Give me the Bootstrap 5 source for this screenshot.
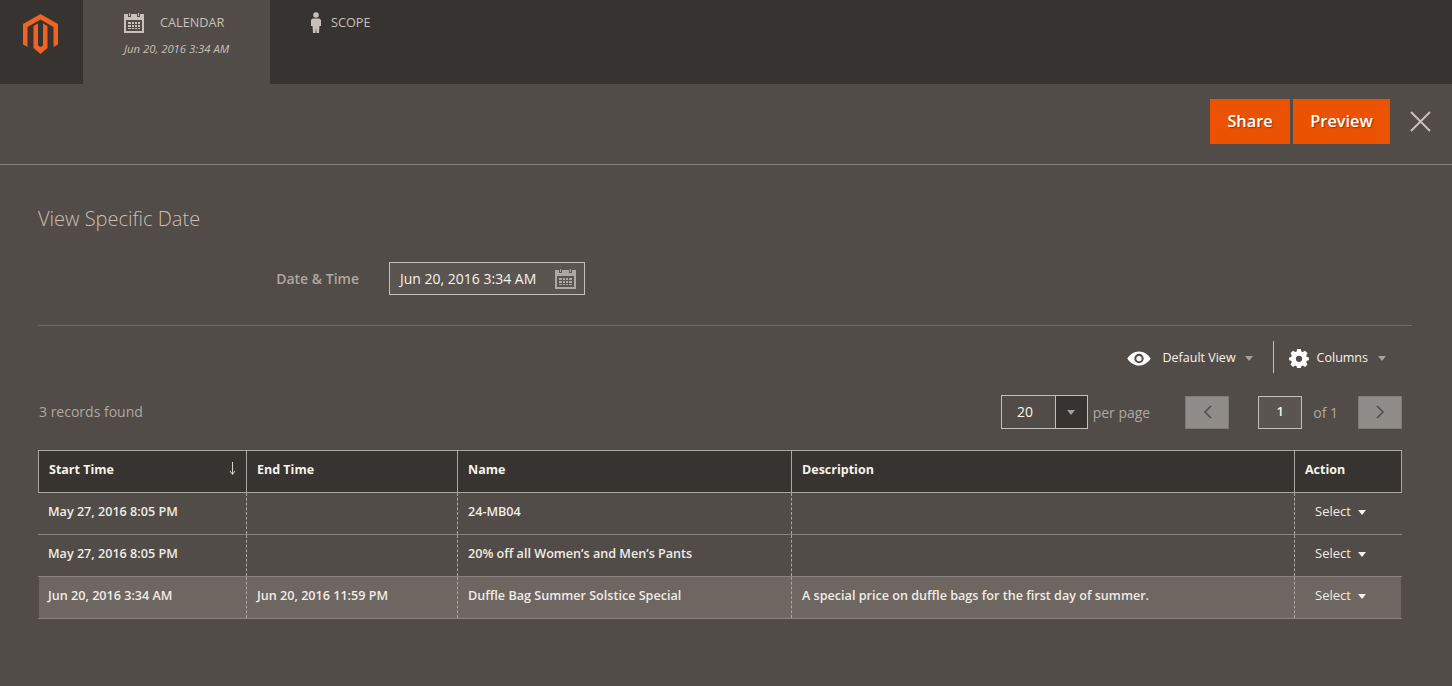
<!DOCTYPE html>
<html lang="en">
<head>
  <meta charset="UTF-8">
  <title>Staging – View Specific Date</title>
  <link href="https://cdn.jsdelivr.net/npm/bootstrap@5.3.0/dist/css/bootstrap.min.css" rel="stylesheet" />
  <style>
    html, body { height: 100%; }
    body {
      font-family: "Open Sans", "Liberation Sans", sans-serif;
      background-color: #514c48;
      color: #f7f3eb;
      font-size: 13px;
      overflow: hidden;
    }
    .top-strip { height: 84px; background: #373330; }
    .logo-cell { width: 83px; padding: 14px 0 0 23px; }
    .tab-calendar { width: 187px; background: #514c48; padding: 12px 0 0 41px; }
    .tab-scope { padding: 12px 0 0 40px; }
    .tab-label { font-size: 12.7px; color: #c7c1b9; line-height: 20px; }
    .tab-date { font-size: 11.3px; font-style: italic; color: #c7c1b9; margin-top: 8px; line-height: 16px; }
    .action-strip { height: 81px; border-bottom: 1px solid #89847f; padding: 15px 21px 0 0; }
    .btn-orange {
      background: #eb5202; color: #fff; border: 0; border-radius: 0;
      height: 45px; font-size: 16.3px; font-weight: 600; line-height: 45px; padding: 0;
      text-shadow: 1px 1px 1px rgba(0,0,0,.35);
    }
    .btn-orange:hover { background: #eb5202; color: #fff; }
    .btn-share { width: 80px; margin-right: 3px; }
    .btn-preview { width: 97px; margin-right: 20px; }
    .close-x { margin-top: 12px; }
    .page-body { padding: 40px 40px 0 38px; }
    .page-title { font-size: 20px; font-weight: 300; color: #d0bcae; line-height: 28px; margin: 0; }
    .field-row { margin-top: 29px; padding-bottom: 30px; border-bottom: 1px solid #6f6a66; }
    .field-label { width: 321px; text-align: right; font-weight: 600; font-size: 14px; color: #aea8a2; margin-right: 30px; }
    .date-box {
      width: 196px; height: 33px; border: 1px solid #c4bfb8; background: #5a5551;
      padding: 0 8px 0 10px; font-size: 14px; color: #f7f3eb;
    }
    .view-row { height: 32px; margin-top: 16px; padding-right: 26px; font-size: 12.5px; }
    .caret-sm { width: 0; height: 0; border-left: 4px solid transparent; border-right: 4px solid transparent; border-top: 5px solid #a5a09a; display: inline-block; }
    .caret-white { border-top-color: #f7f3eb; }
    .view-split { width: 1px; height: 32px; background: #c4bfb8; margin: -2px 15px 0 20px; }
    .caret-gap { margin-left: 9px; }
    .caret-gap-end { margin-left: 10px; }
    .pager-row { height: 34px; margin-top: 21px; padding-right: 10px; }
    .found-text { font-size: 14px; color: #aea8a2; padding: 0 0 2px 1px; }
    .pager-text { font-size: 14px; color: #aea8a2; }
    .size-box { width: 87px; height: 34px; border: 1px solid #c4bfb8; }
    .size-num { width: 53px; padding-right: 6px; text-align: center; font-size: 14px; line-height: 32px; background: #514c48; }
    .size-drop { flex: 1; background: #373330; border-left: 1px solid #c4bfb8; }
    .per-page { margin-left: 5px; margin-right: 35px; }
    .page-arrow { width: 44px; height: 33px; background: #8f8c89; border: 1px solid #7d7a76; }
    .page-num { width: 44px; height: 33px; margin-left: 29px; border: 1px solid #c4bfb8; background: #5a5551; font-size: 13px; font-weight: 600; }
    .page-of { margin-left: 11px; margin-right: 20px; }
    .grid-table { width: 1363px; margin-top: 21px; border-collapse: collapse; table-layout: fixed; }
    .grid-table th {
      background: #373330; height: 42px; padding: 0 10px 2px; font-size: 12.5px; font-weight: 700;
      border: 1px solid #aaa6a1; color: #f7f3eb;
    }
    .grid-table td {
      height: 42px; padding: 0 10px 3px; font-size: 12.6px; font-weight: 600; color: #f0ece5;
      border-bottom: 1px solid #89847f; border-left: 1px dashed #aaa6a1;
    }
    .grid-table td:first-child { border-left: 1px solid #514c48; padding-left: 9px; }
    .grid-table td:last-child { border-right: 1px solid #514c48; }
    .grid-table tr.row-on td { background: #6d6661; }
    .sort-arrow { float: right; margin: 1px 0 0 0; }
    .grid-table td.select-cell { padding: 0 10px 4px 20px; font-size: 13px; font-weight: 400; }
    .select-cell .caret-sm { margin-left: 7px; }
  </style>
</head>
<body>

  <div class="top-strip d-flex">
    <div class="logo-cell">
      <svg width="35" height="40" viewBox="0 0 35 40"><path fill="#f26322" d="M17.500 0 35 10v20.500L30.500 33V13L17.500 5.500 4.500 13v20L0 30.500V10z"/><path fill="#f26322" d="M10.500 12 15 9.500v22l2.500 1.500 2.500-1.500v-22l4.500 2.500v22L17.500 40l-7-6z"/></svg>
    </div>
    <div class="tab-calendar">
      <div class="d-flex align-items-start">
        <svg width="20" height="21" viewBox="0 0 20 21"><path fill="#c7c1b9" d="M0 2h20v19H0z"/><path fill="#514c48" d="M2 8h16v11H2z"/><path fill="#c7c1b9" d="M4 10h12v7H4z"/><path fill="#514c48" d="M7 10h1v7H7zM10 10h1v7h-1zM13 10h1v7h-1zM4 12h12v1H4zM4 15h12v1H4z"/><path fill="#514c48" d="M4 0h3v5H4zM13 0h3v5h-3z"/><path fill="#c7c1b9" d="M5 1h1v3H5zM14 1h1v3h-1z"/></svg>
        <span class="tab-label ms-3">CALENDAR</span>
      </div>
      <div class="tab-date">Jun 20, 2016 3:34 AM</div>
    </div>
    <div class="tab-scope d-flex align-items-start">
      <svg width="12" height="21" viewBox="0 0 12 21"><circle cx="6" cy="3" r="2.800" fill="#c7c1b9"/><path fill="#c7c1b9" d="M2.500 6.500h7L11 8v6H9.500l-.5 7H6.500L6 16l-.5 5H3l-.5-7H1V8z"/></svg>
      <span class="tab-label" style="margin-left:9px">SCOPE</span>
    </div>
  </div>

  <div class="action-strip d-flex justify-content-end">
    <button type="button" class="btn btn-orange btn-share">Share</button>
    <button type="button" class="btn btn-orange btn-preview">Preview</button>
    <svg class="close-x" width="21" height="21" viewBox="0 0 21 21"><path d="M1 1l19 19M20 1 1 20" stroke="#c7c1b9" stroke-width="2" fill="none"/></svg>
  </div>

  <div class="page-body">
    <h2 class="page-title">View Specific Date</h2>

    <div class="field-row d-flex align-items-center">
      <div class="field-label">Date &amp; Time</div>
      <div class="date-box d-flex align-items-center justify-content-between">
        <span>Jun 20, 2016 3:34 AM</span>
        <svg width="21" height="21" viewBox="0 0 21 21"><path fill="#aea8a2" d="M0 2h21v19H0z"/><path fill="#5a5551" d="M2 8h17v11H2z"/><path fill="#aea8a2" d="M4 10h13v7H4z"/><path fill="#5a5551" d="M7 10h1v7H7zM10 10h1v7h-1zM13 10h1v7h-1zM4 12h13v1H4zM4 15h13v1H4z"/><path fill="#5a5551" d="M4 0h3v5H4zM14 0h3v5h-3z"/><path fill="#aea8a2" d="M5 1h1v3H5zM15 1h1v3h-1z"/></svg>
      </div>
    </div>

    <div class="view-row d-flex align-items-center justify-content-end">
      <svg class="me-2" width="24" height="15" viewBox="0 0 25 16"><path fill="#fff" fill-rule="evenodd" d="M12.500 0.500C18 .5 22.500 4 25 8c-2.500 4-7 7.500-12.500 7.500S2.500 12 0 8C2.500 4 7 .5 12.500.5zM12.500 3a5 5 0 1 0 0 10 5 5 0 0 0 0-10z"/><circle cx="12.500" cy="8" r="2.800" fill="#fff"/></svg>
      <span class="ms-1">Default View</span>
      <span class="caret-sm caret-gap"></span>
      <div class="view-split"></div>
      <svg width="20" height="20" viewBox="0 0 20 20"><path fill="#fff" fill-rule="evenodd" d="M8 0h4l.6 2.800 1.700.7L16.700 2l2.800 2.800-1.500 2.400.7 1.700L21 9.500v3l-2.300.6-.7 1.700 1.500 2.400-2.800 2.800-2.400-1.500-1.700.7L12 22H8l-.6-2.800-1.700-.7L3.300 20 .5 17.200 2 14.800l-.7-1.700L-1 12.500v-3l2.300-.6.7-1.700L.5 4.800 3.300 2l2.400 1.500 1.700-.7zM10 7.500a3.500 3.500 0 1 0 0 7 3.500 3.500 0 0 0 0-7z" transform="translate(1 .9) scale(.9)"/></svg>
      <span class="ms-2">Columns</span>
      <span class="caret-sm caret-gap-end"></span>
    </div>

    <div class="pager-row d-flex align-items-center">
      <div class="found-text flex-grow-1">3 records found</div>
      <div class="size-box d-flex">
        <div class="size-num">20</div>
        <div class="size-drop d-flex align-items-center justify-content-center"><span class="caret-sm"></span></div>
      </div>
      <span class="pager-text per-page">per page</span>
      <div class="page-arrow d-flex align-items-center justify-content-center">
        <svg width="9" height="14" viewBox="0 0 9 14"><path d="M8 1 2 7l6 6" stroke="#514c48" stroke-width="1.500" fill="none"/></svg>
      </div>
      <div class="page-num d-flex align-items-center justify-content-center">1</div>
      <span class="pager-text page-of">of 1</span>
      <div class="page-arrow d-flex align-items-center justify-content-center">
        <svg width="9" height="14" viewBox="0 0 9 14"><path d="M1 1l6 6-6 6" stroke="#514c48" stroke-width="1.500" fill="none"/></svg>
      </div>
    </div>

    <table class="grid-table">
      <colgroup>
        <col style="width:208px"><col style="width:211px"><col style="width:334px"><col style="width:503px"><col style="width:107px">
      </colgroup>
      <thead>
        <tr>
          <th>Start Time<svg class="sort-arrow" width="7" height="13" viewBox="0 0 7 13"><path d="M3.500 0v12M1 9l2.500 3.500L6 9" stroke="#d8d4ce" fill="none"/></svg></th>
          <th>End Time</th>
          <th>Name</th>
          <th>Description</th>
          <th>Action</th>
        </tr>
      </thead>
      <tbody>
        <tr>
          <td>May 27, 2016 8:05 PM</td><td></td><td>24-MB04</td><td></td>
          <td class="select-cell">Select<span class="caret-sm caret-white align-middle"></span></td>
        </tr>
        <tr>
          <td>May 27, 2016 8:05 PM</td><td></td><td>20% off all Women’s and Men’s Pants</td><td></td>
          <td class="select-cell">Select<span class="caret-sm caret-white align-middle"></span></td>
        </tr>
        <tr class="row-on">
          <td>Jun 20, 2016 3:34 AM</td><td>Jun 20, 2016 11:59 PM</td><td>Duffle Bag Summer Solstice Special</td><td>A special price on duffle bags for the first day of summer.</td>
          <td class="select-cell">Select<span class="caret-sm caret-white align-middle"></span></td>
        </tr>
      </tbody>
    </table>
  </div>

  <script src="https://cdn.jsdelivr.net/npm/bootstrap@5.3.0/dist/js/bootstrap.bundle.min.js"></script>
</body>
</html>
